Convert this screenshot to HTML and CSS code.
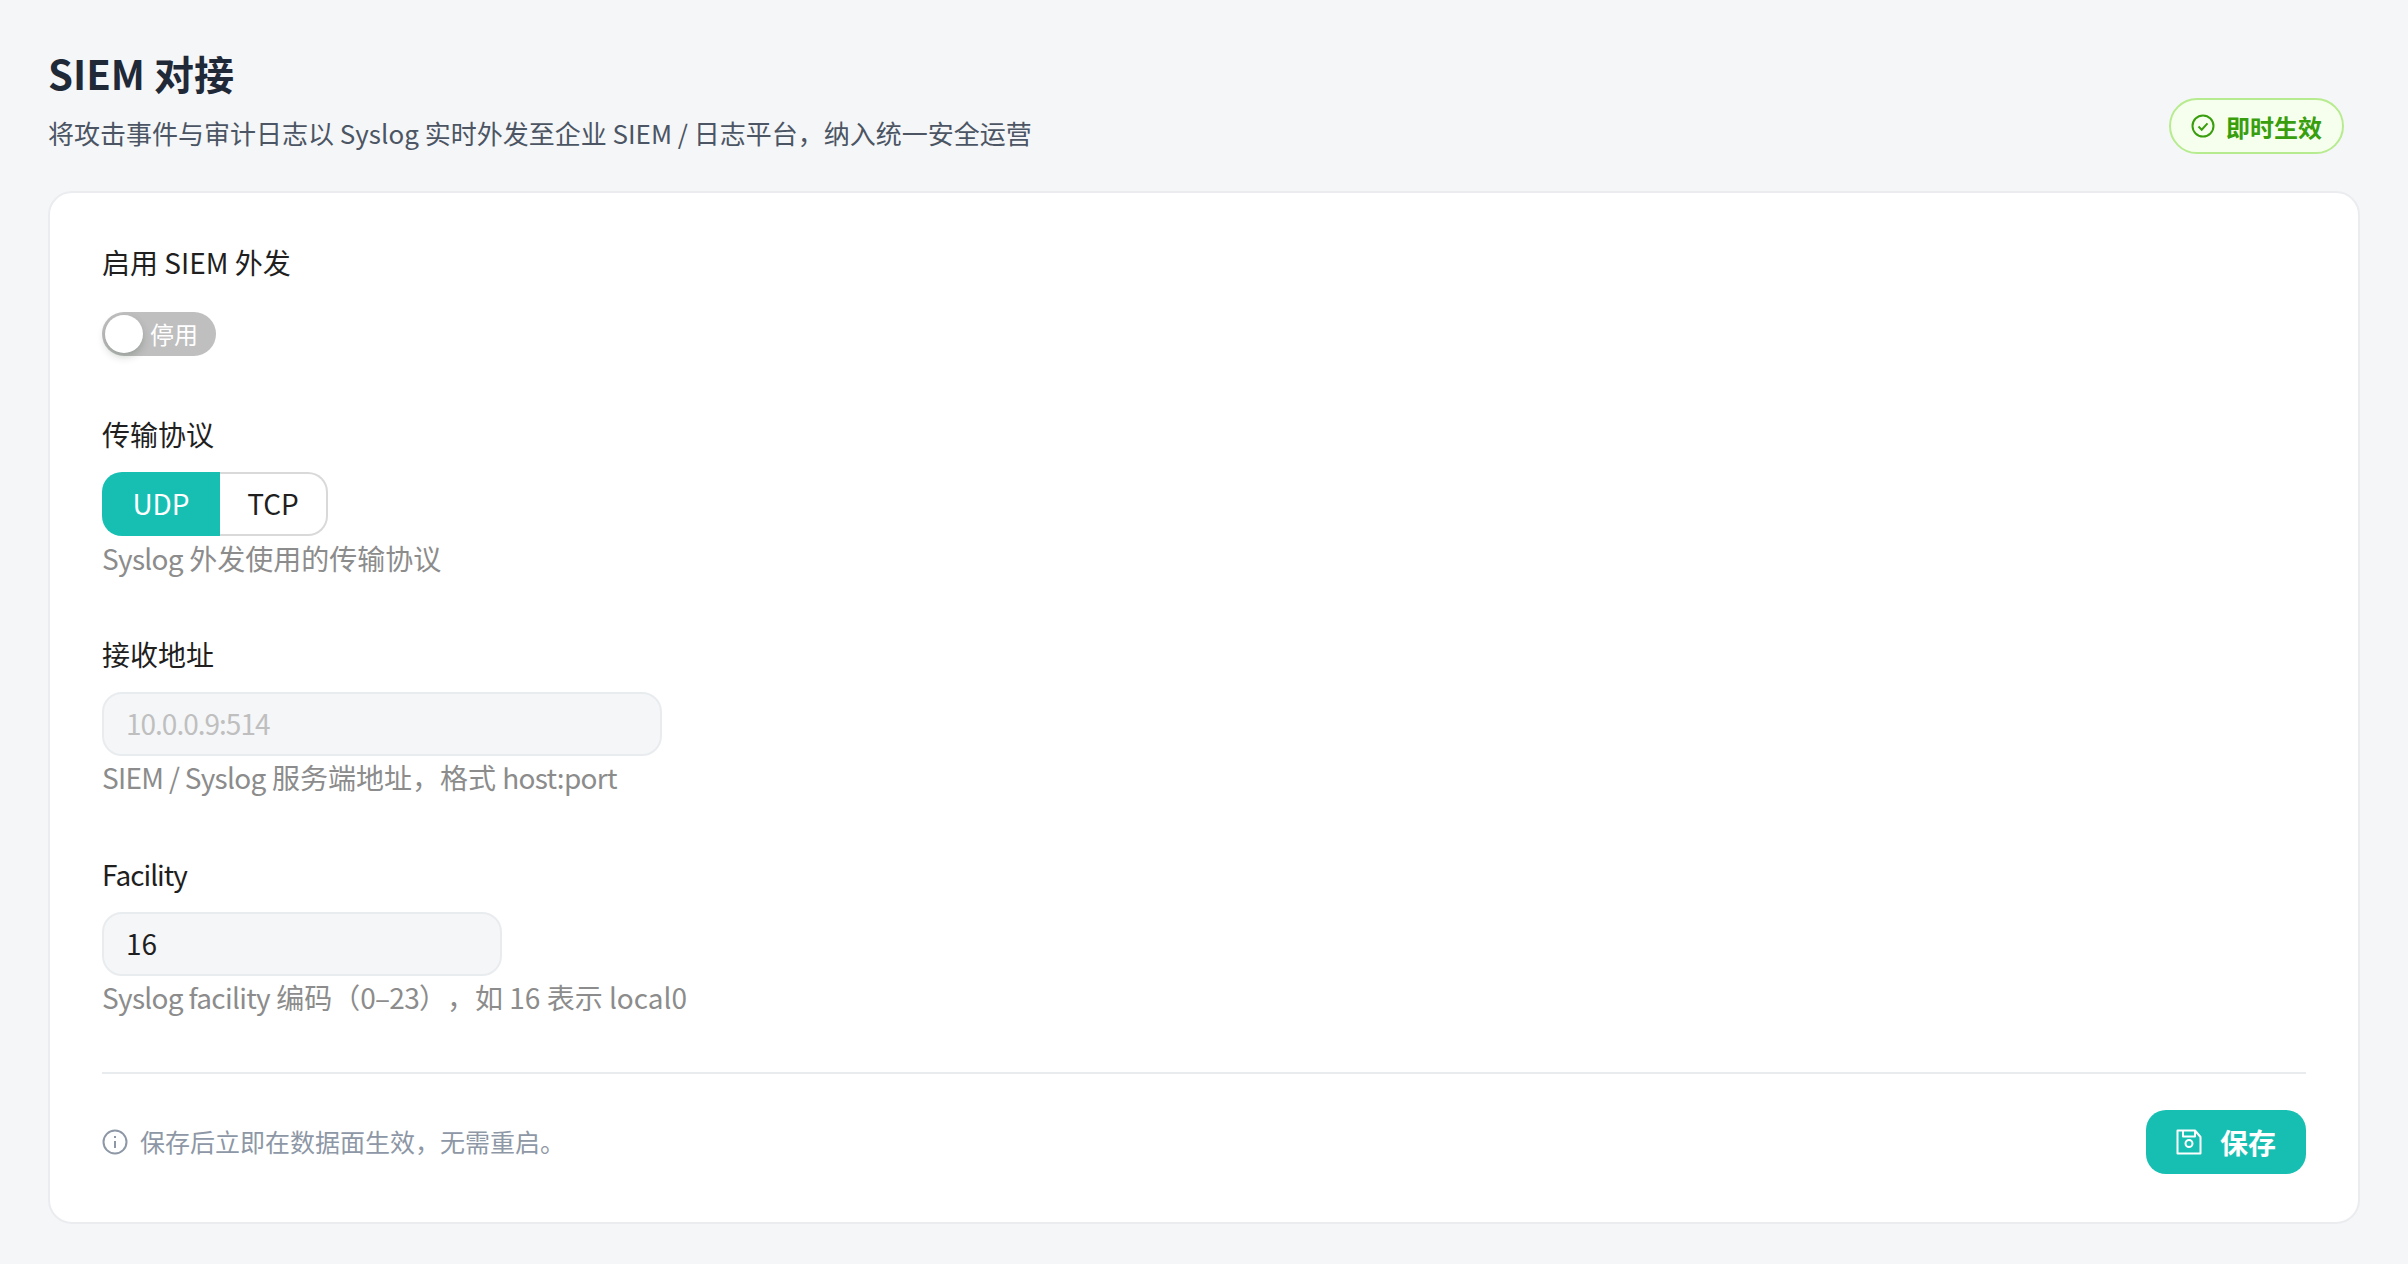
FILE: index.html
```html
<!DOCTYPE html>
<html lang="zh-CN">
<head>
<meta charset="utf-8">
<title>SIEM 对接</title>
<link rel="stylesheet" href="styles.css">
</head>
<body>
<main class="page">
  <header class="page-head">
    <div>
      <h1 class="title">SIEM 对接</h1>
      <p class="subtitle">将攻击事件与审计日志以 Syslog 实时外发至企业 SIEM / 日志平台，纳入统一安全运营</p>
    </div>
    <span class="badge">
      <svg class="badge-icon" viewBox="0 0 24 24" fill="none" stroke="currentColor" stroke-width="2"><circle cx="12" cy="12" r="10.5"/><path d="M7.5 12.5l3.2 3.2 5.8-6.4"/></svg>
      即时生效
    </span>
  </header>
  <section class="card">
    <div class="item">
      <div class="label">启用 SIEM 外发</div>
      <div class="switch"><span class="knob"></span><span class="switch-text">停用</span></div>
    </div>
    <div class="item item-first">
      <div class="label label-tight">传输协议</div>
      <div class="segment"><span class="seg seg-on">UDP</span><span class="seg seg-off">TCP</span></div>
      <div class="help"><span class="lat">Syslog</span> 外发使用的传输协议</div>
    </div>
    <div class="item item-gap">
      <div class="label label-tight">接收地址</div>
      <div class="field field-wide placeholder"><span class="lat-tight">10.0.0.9:514</span></div>
      <div class="help help-up"><span class="lat">SIEM / Syslog</span> 服务端地址，格式 <span class="lat">host:port</span></div>
    </div>
    <div class="item item-gap">
      <div class="label label-tight"><span class="lat-tight">Facility</span></div>
      <div class="field field-narrow">16</div>
      <div class="help help-up"><span class="lat">Syslog facility</span> 编码（<span class="lat">0–23</span>），如 16 表示 <span class="lat-none">local0</span></div>
    </div>
    <footer class="foot">
      <div class="note">
        <svg class="note-icon" viewBox="0 0 26 26" fill="none" stroke="currentColor" stroke-width="2"><circle cx="13" cy="13" r="11.5"/><path d="M13 12v7"/><path d="M13 7v2"/></svg>
        <span class="note-text">保存后立即在数据面生效，无需重启。</span>
      </div>
      <button class="save" type="button">
        <svg class="save-icon" viewBox="0 0 26 26" fill="none" stroke="currentColor" stroke-width="2" stroke-linejoin="round"><path d="M1.5 1.500h17.500l5.500 6.500v16.500h-23z"/><path d="M7 1.500v6h12v-6"/><circle cx="13" cy="14.500" r="3.500"/></svg>
        保存
      </button>
    </footer>
  </section>
</main>
</body>
</html>
```
FILE: styles.css
```css
* { box-sizing: border-box; }
html, body { margin: 0; height: 100%; }
body {
  background: #f5f6f8;
  color: #1f1f1f;
  font-family: "Noto Sans CJK SC", "Noto Sans", sans-serif;
  text-spacing-trim: space-all;
}
.page { padding: 47px 48px 42px; }
.page-head {
  display: flex;
  justify-content: space-between;
  align-items: flex-start;
  height: 144px;
  padding-right: 16px;
}
.title {
  margin: 0;
  font-size: 40px;
  line-height: 52px;
  font-weight: 700;
  color: #1f2937;
}
.subtitle {
  margin: 17px 0 0;
  font-size: 26px;
  line-height: 34px;
  color: #4b5563;
}
.badge {
  display: flex;
  align-items: center;
  gap: 11px;
  height: 56px;
  margin-top: 51px;
  padding: 0 20px;
  border: 2px solid #b7eb8f;
  border-radius: 28px;
  background: #f6ffed;
  color: #389e0d;
  font-size: 24px;
  font-weight: 700;
}
.badge-icon { width: 24px; height: 24px; }
.card {
  padding: 51px 52px 48px;
  background: #fff;
  border: 2px solid #eaecef;
  border-radius: 24px;
}
.item-first { margin-top: 60px; }
.item-gap { margin-top: 58px; }
.label {
  font-size: 28px;
  line-height: 36px;
  color: #1f1f1f;
}
.label-tight { margin-bottom: 20px; }
.lat { letter-spacing: -0.7px; }
.lat-tight { letter-spacing: -1px; }
.lat-none { letter-spacing: 0; }
.switch {
  display: flex;
  align-items: center;
  width: 114px;
  height: 44px;
  margin-top: 32px;
  padding-left: 3px;
  border-radius: 22px;
  background: #bfbfbf;
}
.knob {
  width: 38px;
  height: 38px;
  border-radius: 50%;
  background: #fff;
  box-shadow: 0 4px 8px rgba(0, 35, 11, 0.2);
}
.switch-text {
  margin-left: 7px;
  font-size: 24px;
  line-height: 44px;
  color: #fff;
}
.segment {
  display: flex;
  width: 226px;
  height: 64px;
  font-size: 28px;
}
.seg {
  display: flex;
  align-items: center;
  justify-content: center;
  padding-bottom: 2px;
}
.seg-on {
  width: 118px;
  background: #17bfb2;
  color: #fff;
  border-radius: 20px 0 0 20px;
}
.seg-off {
  width: 108px;
  border: 2px solid #d9d9d9;
  border-left: 0;
  border-radius: 0 20px 20px 0;
  color: #1f1f1f;
}
.help {
  margin-top: 2px;
  font-size: 28px;
  line-height: 40px;
  color: #8c8c8c;
}
.help-up { line-height: 38px; padding-bottom: 2px; }
.field {
  display: flex;
  align-items: center;
  height: 64px;
  padding: 0 22px 2px;
  background: #f5f6f8;
  border: 2px solid #e9ecef;
  border-radius: 20px;
  font-size: 28px;
}
.field-wide { width: 560px; }
.field-narrow { width: 400px; }
.placeholder { color: #bfbfbf; }
.foot {
  display: flex;
  justify-content: space-between;
  align-items: center;
  margin-top: 54px;
  padding-top: 36px;
  border-top: 2px solid #e9ecef;
}
.note {
  display: flex;
  align-items: center;
  gap: 12px;
  font-size: 25px;
  color: #8d97a5;
}
.note-icon { width: 26px; height: 26px; }
.note-text { padding-bottom: 3px; }
.save {
  display: flex;
  align-items: center;
  justify-content: center;
  gap: 18px;
  width: 160px;
  height: 64px;
  padding: 0;
  border: 0;
  border-radius: 20px;
  background: #17bfb2;
  color: #fff;
  font-family: inherit;
  font-size: 28px;
  font-weight: 700;
}
.save-icon { width: 26px; height: 26px; }
```
